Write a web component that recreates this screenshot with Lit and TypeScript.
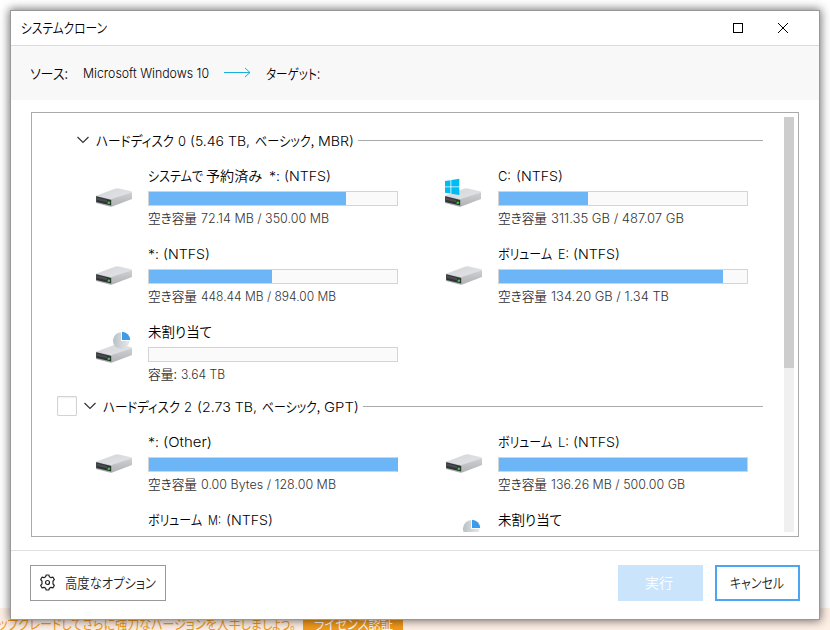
import { LitElement, html, svg, css, nothing } from "lit";
import { customElement, property } from "lit/decorators.js";
import { styleMap } from "lit/directives/style-map.js";

// A run of text: [text, gap before it, width it takes].
type Run = [string, number, number];

@customElement("fitted-text")
class FittedText extends LitElement {
  @property({ attribute: false }) runs: Run[] = [];

  static styles = css`
    :host { display: inline-flex; align-items: center; white-space: nowrap; flex: none; }
    .run { display: block; flex: none; }
    .ink { display: inline-block; transform-origin: 0 50%; white-space: pre; }
    .latin { font-family: Inter, "Liberation Sans", sans-serif; font-weight: 300; font-size: 0.96em; }
  `;

  updated() {
    this.renderRoot.querySelectorAll<HTMLElement>(".ink").forEach((el, i) => {
      el.style.transform = "none";
      const natural = el.getBoundingClientRect().width;
      if (natural) el.style.transform = `scaleX(${this.runs[i][2] / natural})`;
    });
  }

  render() {
    return this.runs.map(
      ([text, gap, width]) => html`<span class="run" style=${styleMap({ marginLeft: `${gap}px`, width: `${width}px` })}><span class="ink ${/^[\x20-\x7e]+$/.test(text) ? "latin" : ""}">${text}</span></span>`
    );
  }
}

type DriveKind = "plain" | "windows" | "pie";

@customElement("drive-icon")
class DriveIcon extends LitElement {
  @property() kind: DriveKind = "plain";

  static styles = css`
    :host { display: block; }
    .icon { display: block; }
  `;

  render() {
    const windows = svg`<g fill="#00bcf2">
      <path d="M-1 7l5.500-.8v6.300H-1zM5.300 6l8-1.200v7.700H5.300zM-1 13.300h5.500v6.300L-1 18.800zM5.300 13.300h8V21L5.300 19.800z"/></g>`;
    const pie = svg`<circle cx="25.2" cy="10.500" r="8.300" fill="url(#disc)"/>
      <path d="M25.200 1.500h1a9 9 0 0 1 8.500 9.500h-9.500z" fill="#fff"/>
      <path d="M26 1.700a8.500 8.500 0 0 1 8.200 8.300H26z" fill="#3d9be9"/>`;
    return html`<svg class="icon" width="40" height="36" viewBox="-2 -1 40 36">
      <defs>
        <linearGradient id="top" x1="0" y1="0" x2="1" y2="1"><stop offset="0" stop-color="#d4d5d8"/><stop offset="1" stop-color="#e4e5e8"/></linearGradient>
        <linearGradient id="side" x1="0" y1="0" x2="0" y2="1"><stop offset="0" stop-color="#cfd0d3"/><stop offset="1" stop-color="#b0b2b5"/></linearGradient>
        <linearGradient id="disc"><stop offset="0" stop-color="#b9c1c5"/><stop offset="1" stop-color="#e6e9eb"/></linearGradient>
      </defs>
      <g transform=${this.kind === "windows" ? "translate(-1 0)" : "translate(0 0)"}>
        <path d="M0 21.800 19.500 14.400Q21 14 23 14.400L35.200 17.300Q36 17.600 36 18.500L16 26z" fill="url(#top)"/>
        <path d="M15.500 25 36 18.200v6.800L16.300 32.500Q15.500 32.700 15 32.500z" fill="url(#side)"/>
        <path d="M0 21.700 15.600 25.500V32.700L13.500 32.600 0 29z" fill="#a9abae"/>
        <path d="M.2 22.300 15.200 26V31.500L.2 28z" fill="#303335"/>
        <path d="M1 23.500 11 26V28.300L1 26z" fill="#494d50"/>
        <circle cx="12.800" cy="28.700" r="1.300" fill="#2fce3a"/>
      </g>
      ${this.kind === "windows" ? windows : this.kind === "pie" ? pie : nothing}
    </svg>`;
  }
}

interface Volume {
  name: Run[];
  info?: Run[];
  used: number;
  kind?: DriveKind;
  flush?: boolean;
}

@customElement("volume-item")
class VolumeItem extends LitElement {
  @property({ attribute: false }) volume!: Volume;

  static styles = css`
    :host { display: flex; height: 73px; }
    .pic { width: 52px; padding-top: 8px; box-sizing: border-box; flex: none; }
    .pic drive-icon { margin-left: -2px; }
    .body { width: 250px; display: flex; flex-direction: column; }
    .name { height: 20px; line-height: 20px; font-size: 14px; color: #000; }
    .bar { height: 15px; margin-top: 6px; box-sizing: border-box; border: 1px solid #d2d4da; background: #fafafa; flex: none; }
    .bar.flush { border-right-color: #6cb6f8; }
    .fill { height: 100%; background: #6cb6f8; }
    .info { height: 18px; line-height: 18px; margin-top: 3px; font-size: 13px; color: #333; }
  `;

  render() {
    const v = this.volume;
    return html`
      <div class="pic"><drive-icon .kind=${v.kind ?? "plain"}></drive-icon></div>
      <div class="body">
        <fitted-text class="name" .runs=${v.name}></fitted-text>
        <div class="bar ${v.flush ? "flush" : ""}"><div class="fill" style=${styleMap({ width: `${v.used}%` })}></div></div>
        ${v.info ? html`<fitted-text class="info" .runs=${v.info}></fitted-text>` : nothing}
      </div>`;
  }
}

const ntfs = (gap: number): Run => ["(NTFS)", gap, 47];
const free = (text: string, width: number): Run[] => [["空き容量", 0, 49], [text, 4, width]];

const disks: { selectable: boolean; title: Run[]; volumes: Volume[] }[] = [
  {
    selectable: false,
    title: [["ハードディスク", 0, 78], ["0", 4, 8], ["(5.46 TB,", 4, 60], ["ベーシック,", 5, 59], ["MBR)", 4, 36]],
    volumes: [
      { name: [["システムで", 0, 55], ["予約済み", 3, 56], ["*:", 7, 11], ntfs(4)], info: free("72.14 MB / 350.00 MB", 128), used: 79.44 },
      { name: [["C:", 0, 13], ntfs(5)], info: free("311.35 GB / 487.07 GB", 133), used: 35.9, kind: "windows" },
      { name: [["*:", 0, 11], ntfs(4)], info: free("448.44 MB / 894.00 MB", 135), used: 49.6 },
      { name: [["ボリューム", 0, 54], ["E:", 6, 11], ntfs(4)], info: free("134.20 GB / 1.34 TB", 118), used: 90.4 },
      { name: [["未割り当て", 0, 64]], info: [["容量:", 0, 29], ["3.64 TB", 4, 44]], used: 0, kind: "pie" },
    ],
  },
  {
    selectable: true,
    title: [["ハードディスク", 0, 77], ["2", 4, 8], ["(2.73 TB,", 5, 60], ["ベーシック,", 5, 58], ["GPT)", 4, 35]],
    volumes: [
      { name: [["*:", 0, 11], ["(Other)", 4, 49]], info: free("0.00 Bytes / 128.00 MB", 135), used: 100, flush: true },
      { name: [["ボリューム", 0, 54], ["L:", 6, 11], ntfs(4)], info: free("136.26 MB / 500.00 GB", 134), used: 100 },
      { name: [["ボリューム", 0, 54], ["M:", 6, 13], ntfs(5)], used: 50 },
      { name: [["未割り当て", 0, 64]], used: 0, kind: "pie" },
    ],
  },
];

@customElement("app-root")
class AppRoot extends LitElement {
  static styles = css`
    :host {
      display: block; position: relative; width: 830px; height: 630px; overflow: hidden; background: #fff; color: #000;
      font-family: "Noto Sans CJK JP", sans-serif; font-weight: 350; font-size: 14px;
      font-feature-settings: "palt"; box-sizing: border-box; padding: 10px;
    }
    .promo {
      position: absolute; left: 0; right: 0; bottom: 0; height: 22px; display: flex; background: #fff0e6;
      color: #f39a1c; line-height: 14px; font-weight: 400;
    }
    .promo-text { margin-left: -2px; width: 305px; padding-top: 8px; }
    .promo-button { width: 100px; padding: 8px 0 0 11px; box-sizing: border-box; background: #f39a1c; color: #fff; }
    .window {
      position: relative; width: 810px; height: 610px; box-sizing: border-box; border: 1px solid #999;
      background: #fff; box-shadow: 0 0 9px 1px rgba(0, 0, 0, 0.55); display: flex; flex-direction: column;
    }
    .titlebar { height: 35px; flex: none; box-sizing: border-box; border-bottom: 1px solid #dcdcdc; display: flex; align-items: center; padding: 0 30px 0 10px; line-height: 18px; }
    .titlebar .controls { margin-left: auto; display: flex; gap: 33px; }
    .title { margin-bottom: 2px; }
    .route { height: 54px; flex: none; background: #f8f8f8; display: flex; align-items: center; padding-left: 19px; line-height: 18px; box-sizing: border-box; padding-bottom: 1px; }
    .route .arrow { margin: 0 15px 0 15px; }
    .list { height: 425px; width: 768px; margin: 12px 0 0 20px; flex: none; box-sizing: border-box; border: 1px solid #aaa; display: flex; padding: 4px 4px 4px 25px; }
    .scroll { width: 727px; height: 415px; overflow: hidden; flex: none; }
    .track { width: 10px; height: 415px; background: #f0f0f0; }
    .thumb { height: 251px; background: #cdcdcd; }
    .disk { padding: 11px 21px 0 0; }
    .disk + .disk { padding-top: 0; }
    .head { height: 24px; display: flex; align-items: center; padding-left: 20px; line-height: 20px; }
    .head.selectable { padding-left: 0; }
    .check { width: 20px; height: 20px; box-sizing: border-box; border: 1px solid #d3d3d3; border-radius: 1px; margin-right: 7px; box-shadow: inset 0 1px 2px #eee; }
    .head .text { margin-left: 7px; }
    .rule { flex: 1; height: 1px; background: #aaa; margin: 1px 0 0 4px; }
    .volumes { display: grid; grid-template-columns: 302px 302px; column-gap: 48px; row-gap: 5px; padding: 13px 0 0 39px; }
    .footer { margin-top: 13px; flex: 1; border-top: 1px solid #dfdfdf; display: flex; align-items: flex-start; padding: 14px 19px 0; }
    .button { height: 36px; box-sizing: border-box; display: flex; align-items: center; justify-content: center; color: #222; padding-bottom: 1px; line-height: 18px; }
    .button fitted-text { margin-bottom: 2px; }
    .options { width: 136px; border: 1px solid #999; gap: 9px; padding-right: 2px; }
    .run { width: 85px; margin-left: auto; background: #c9e4fb; color: #fff; padding-right: 3px; }
    .cancel { width: 85px; margin-left: 12px; border: 2px solid #4aa5f2; padding-right: 1px; }
    .glyph { display: block; flex: none; }
  `;

  render() {
    return html`
      <div class="promo">
        <fitted-text class="promo-text" .runs=${[["ップグレードしてさらに強力なバージョンを入手しましょう。", 0, 298]] as Run[]}></fitted-text>
        <fitted-text class="promo-button" .runs=${[["ライセンス認証", 0, 79]] as Run[]}></fitted-text>
      </div>
      <div class="window">
        <div class="titlebar">
          <fitted-text class="title" .runs=${[["システムクローン", 0, 86]] as Run[]}></fitted-text>
          <div class="controls">
            <svg class="glyph" width="12" height="12"><rect x="1.5" y="1.5" width="9" height="9" fill="none" stroke="#000"/></svg>
            <svg class="glyph" width="12" height="12"><path d="M1 1l10 10M11 1 1 11" stroke="#000" stroke-width="1"/></svg>
          </div>
        </div>
        <div class="route">
          <fitted-text .runs=${[["ソース:", 0, 38], ["Microsoft Windows 10", 15, 126]] as Run[]}></fitted-text>
          <svg class="glyph arrow" width="27" height="11"><path d="M0 5.5h26M21 1l5 4.5L21 10" fill="none" stroke="#18b0dc"/></svg>
          <fitted-text .runs=${[["ターゲット:", 0, 54]] as Run[]}></fitted-text>
        </div>
        <div class="list">
          <div class="scroll">
            ${disks.map(
              (d) => html`<div class="disk">
                <div class="head ${d.selectable ? "selectable" : ""}">
                  ${d.selectable ? html`<div class="check"></div>` : nothing}
                  <svg class="glyph" width="12" height="8"><path d="M.5 1 6 6.5 11.5 1" fill="none" stroke="#333" stroke-width="1.2"/></svg>
                  <fitted-text class="text" .runs=${d.title}></fitted-text>
                  <div class="rule"></div>
                </div>
                <div class="volumes">${d.volumes.map((v) => html`<volume-item .volume=${v}></volume-item>`)}</div>
              </div>`
            )}
          </div>
          <div class="track"><div class="thumb"></div></div>
        </div>
        <div class="footer">
          <div class="button options">
            <svg class="glyph" width="17" height="17" viewBox="0 0 17 17" fill="none" stroke="#222" stroke-width="1.2" stroke-linejoin="round">
              <path d="M7.200 1h2.600l.6 1.800 1.600.9 2-.5 1.300 2.300-1.300 1.600v2.800l1.300 1.600-1.300 2.300-2-.5-1.600.9-.6 1.800H7.200l-.6-1.800-1.600-.9-2 .5-1.300-2.300L3 9.900V7.100L1.700 5.500 3 3.200l2 .5 1.600-.9z"/>
              <circle cx="8.500" cy="8.500" r="2"/>
            </svg>
            <fitted-text .runs=${[["高度なオプション", 0, 91]] as Run[]}></fitted-text>
          </div>
          <div class="button run"><fitted-text .runs=${[["実行", 0, 28]] as Run[]}></fitted-text></div>
          <div class="button cancel"><fitted-text .runs=${[["キャンセル", 0, 54]] as Run[]}></fitted-text></div>
        </div>
      </div>`;
  }
}
